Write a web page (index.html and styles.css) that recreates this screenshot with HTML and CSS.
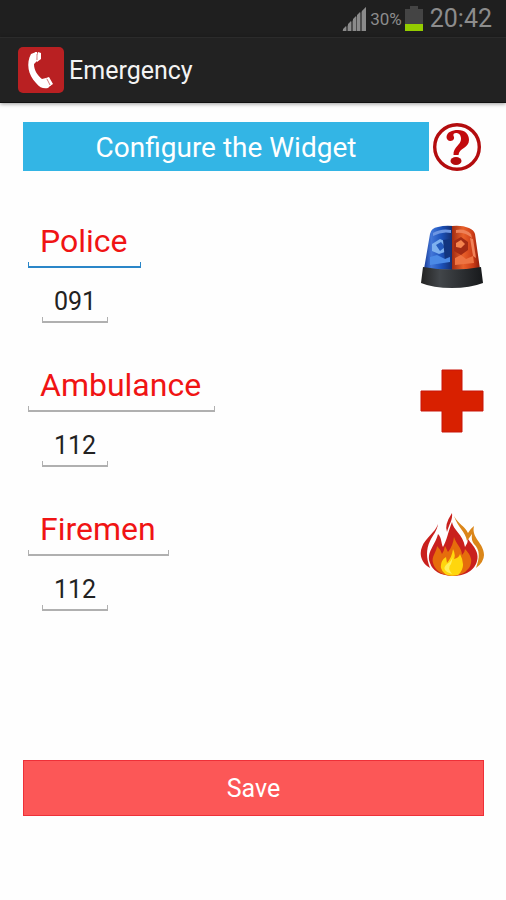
FILE: index.html
```html
<!DOCTYPE html>
<html lang="en">
  <head>
    <meta charset="UTF-8" />
    <meta name="viewport" content="width=device-width, initial-scale=1.0" />

    <title>Emergency</title>
    <link rel="stylesheet" href="styles.css">
  </head>

  <body>
    <div class="status-bar">
      <svg class="signal" viewBox="0 0 24 24" width="24" height="24">
        <path d="M0 24L24 0V24Z" fill="#4c4c4c" />
        <path d="M1 24v-2l3-3v5zM6 24v-7l3-3v10zM11 24V12l3-3v15zM15 24V8l3-3v19zM20 24V4l4-4v24z" fill="#8a8a8a" />
      </svg>
      <span class="percent">30%</span>
      <svg class="battery" viewBox="0 0 18 26" width="18" height="26">
        <path d="M5 0h8v3h5v15H0V3h5z" fill="#444" />
        <path d="M0 18h18v7H0z" fill="#94cc00" />
      </svg>
      <span class="clock">20:42</span>
    </div>

    <header class="action-bar">
      <svg class="logo" viewBox="0 0 46 46" width="46" height="46">
        <rect width="46" height="46" rx="5" fill="#b92022" />
        <path d="M13 7l5-2 1 9-3 3c0 6 3 11 8 15l4-1 5 7-3 3c-4 1-8 0-12-5-8-8-10-20-5-29z" fill="#fff" />
        <path d="M17 5l2 0 0 3 1-3 3 1v6l-4 3zM28 31l3-1 4 7-3 2z" fill="#fff" />
        <path d="M19 7v6M29 32l3 6" stroke="#b92022" stroke-width="0.6" />
      </svg>
      <h1>Emergency</h1>
    </header>

    <form class="config">
      <div class="title-row">
        <h2>Configure the Widget</h2>
        <button type="button" class="help-btn" aria-label="Help">
          <svg viewBox="0 0 48 48" width="48" height="48">
            <circle cx="24" cy="24" r="22.3" fill="none" stroke="#b30c0e" stroke-width="3.4" />
            <path d="M13.500 14C14 9 19 7 25 7C32 7 36 11 36 17C36 25 26 25 25.500 32H20.500C20 24 28 22 28 16C28 12 26 10 23 10C21 10 20 11 20.500 13C22 15 20.500 18 17.500 18C15 18 13.500 16 13.500 14Z" fill="#c20a0d" />
            <ellipse cx="23" cy="38" rx="5.500" ry="4" fill="#b30c0e" />
          </svg>
        </button>
      </div>

      <div class="contact">
        <div class="fields">
          <input type="text" class="name police active" value="Police" aria-label="First contact name" />
          <input type="tel" class="number" value="091" aria-label="First contact number" />
        </div>
        <svg viewBox="0 0 64 64" width="64" height="64">
          <defs>
            <linearGradient id="blue" x2="1">
              <stop offset="0" stop-color="#173a96" />
              <stop offset="0.250" stop-color="#4377d8" />
              <stop offset="0.600" stop-color="#1c52bb" />
              <stop offset="1" stop-color="#142a68" />
            </linearGradient>
            <linearGradient id="orange" x2="1">
              <stop offset="0" stop-color="#a02c12" />
              <stop offset="0.400" stop-color="#e8602a" />
              <stop offset="0.750" stop-color="#cc3c16" />
              <stop offset="1" stop-color="#8c1d0c" />
            </linearGradient>
            <linearGradient id="base" x2="1">
              <stop offset="0" stop-color="#222" />
              <stop offset="0.300" stop-color="#42464a" />
              <stop offset="1" stop-color="#17191b" />
            </linearGradient>
          </defs>
          <path d="M4 44L10 9Q11 3 18 2Q25 0 33 1V45Z" fill="url(#blue)" />
          <path d="M32 1Q42 0 49 3Q54 5 55 9L60 44L32 45Z" fill="url(#orange)" />
          <path d="M13 8q8-5 18-3v3q-9-2-18 3z" fill="#6d96e2" />
          <path d="M36 5q9-2 15 4l1 4q-7-6-16-5z" fill="#ee8158" />
          <path d="M12 19l8-5 9 4-1 8-9 3-7-3z" fill="#7eb1ef" />
          <path d="M16 20l5-3 4 5-5 4z" fill="#245bbe" />
          <path d="M23 15l7-1v16l-5 5z" fill="#12357f" />
          <path d="M10 32l7-2 8 4 5-2v5l-20 3z" fill="#4b8ae6" />
          <path d="M34 16l7-4 7 5v8l-7 5-7-4z" fill="#a22b14" />
          <path d="M36 18l5-3 4 4-4 4-5-1z" fill="#f5854f" />
          <path d="M35 33l6-3 5 4 7-3 1 7-19 2z" fill="#ee7443" />
          <path d="M50 13l3 1 3 19-3-2z" fill="#f2835a" />
          <path d="M3 42Q32 47 61 42L63 58Q50 63 32 63Q13 63 1 58Z" fill="url(#base)" />
        </svg>
      </div>

      <div class="contact">
        <div class="fields">
          <input type="text" class="name ambulance" value="Ambulance" aria-label="Second contact name" />
          <input type="tel" class="number" value="112" aria-label="Second contact number" />
        </div>
        <svg viewBox="0 0 64 64" width="64" height="64">
          <path d="M22 1h20v21h21v20H42v21H22V42H1V22h21z" fill="#d82000" stroke="#c91408" />
        </svg>
      </div>

      <div class="contact">
        <div class="fields">
          <input type="text" class="name firemen" value="Firemen" aria-label="Third contact name" />
          <input type="tel" class="number" value="112" aria-label="Third contact number" />
        </div>
        <svg viewBox="0 0 64 64" width="64" height="64">
          <path d="M18 11C17 18 13 22 10 28C6 36 6 45 10 55C1 50-1 41 2 34C5 25 15 20 18 11Z" fill="#c9201d" />
          <path d="M32 0C33 7 29 11 27 19Q24 12 32 0Z" fill="#c9201d" />
          <path d="M34 3C39 12 44 12 48 20Q50 16 54 13C51 25 64 30 64 42Q64 49 56 55C60 44 60 37 54 31Q51 27 52 21L47 28C45 18 38 15 34 3Z" fill="#db8619" />
          <path d="M32 9C33 17 43 21 45 34Q48 30 48 26C53 33 61 40 56 51Q50 63 32 63Q14 62 10 50C6 39 15 33 18 21C22 25 21 31 23 34C27 27 28 19 32 9Z" fill="#c9201d" />
          <path d="M34 24C36 31 42 35 42 42Q45 39 45 36Q55 46 49 55Q43 63 31 63Q16 61 13 50C11 44 17 38 17 33Q21 37 22 41Q24 38 25 33L28 39Q33 33 34 24Z" fill="#e66d0c" />
          <path d="M33 36Q36 42 34 46Q39 45 40 41Q47 54 38 62Q24 65 21 55Q20 48 26 44L27 50Q32 44 33 36Z" fill="#ffd60d" />
          <path d="M33 43Q32 48 31 51Q27 55 32 61Q20 57 27 51Q32 48 33 43Z" fill="#fff05c" />
        </svg>
      </div>

      <button type="submit" class="save-btn">Save</button>
    </form>
  </body>
</html>
```
FILE: styles.css
```css
* {
  box-sizing: border-box;
}

body {
  margin: 0;
  background-color: #fefefe;
  font-family: Roboto, "Noto Sans", sans-serif;
}

.status-bar {
  display: flex;
  justify-content: flex-end;
  align-items: center;
  height: 37px;
  padding-right: 14px;
  background-color: #1f1f1f;
  color: #8c8c8c;
}

.signal {
  margin-right: 4px;
}

.percent {
  margin-right: 3px;
  font-size: 17px;
}

.battery {
  margin-right: 7px;
}

.clock {
  font-size: 25px;
}

.action-bar {
  display: flex;
  align-items: center;
  gap: 5px;
  height: 66px;
  padding: 0 18px;
  background-color: #222;
  border-top: 1px solid #2b2b2b;
  border-bottom: 1px solid #111;
  box-shadow: 0 1px 4px rgba(0, 0, 0, 0.4);
}

.action-bar h1 {
  margin: 0;
  color: #f3f3f3;
  font-size: 25px;
  font-weight: 400;
}

.config {
  display: flex;
  flex-direction: column;
  padding: 19px 22px 0 23px;
}

.title-row {
  display: flex;
  align-items: center;
  gap: 4px;
  margin: 0 3px 46px 0;
}

.title-row h2 {
  flex: 1;
  margin: 0;
  padding-top: 2px;
  background-color: #33b5e5;
  color: #fff;
  font-size: 28px;
  font-weight: 400;
  line-height: 47px;
  text-align: center;
}

.help-btn {
  padding: 0;
  border: none;
  background: none;
  cursor: pointer;
}

.help-btn svg {
  display: block;
}

.contact {
  display: flex;
  justify-content: space-between;
  height: 144px;
}

.contact svg {
  margin-top: 8px;
}

.fields {
  display: flex;
  flex-direction: column;
  align-items: flex-start;
  gap: 12px;
  padding-left: 5px;
}

/* underline with a small tick at each end */
.fields input {
  --line: #b0b0b0;
  padding: 0 12px;
  border: none;
  outline: none;
  background:
    linear-gradient(var(--line), var(--line)) left bottom / 100% 2px no-repeat,
    linear-gradient(var(--line), var(--line)) left bottom / 1px 6px no-repeat,
    linear-gradient(var(--line), var(--line)) right bottom / 1px 6px no-repeat;
  font-family: inherit;
}

.fields .name {
  height: 51px;
  padding-bottom: 3px;
  color: #f01414;
  font-size: 32px;
}

.fields .active {
  --line: #2a86c8;
}

.police {
  width: 113px;
}

.ambulance {
  width: 187px;
}

.firemen {
  width: 141px;
}

.fields .number {
  width: 66px;
  height: 43px;
  margin-left: 14px;
  color: #222;
  font-size: 25px;
}

.save-btn {
  height: 56px;
  margin-top: 111px;
  border: 1px solid #ee3038;
  background-color: #fc5757;
  color: #fff;
  font-family: inherit;
  font-size: 25px;
  cursor: pointer;
}
```
